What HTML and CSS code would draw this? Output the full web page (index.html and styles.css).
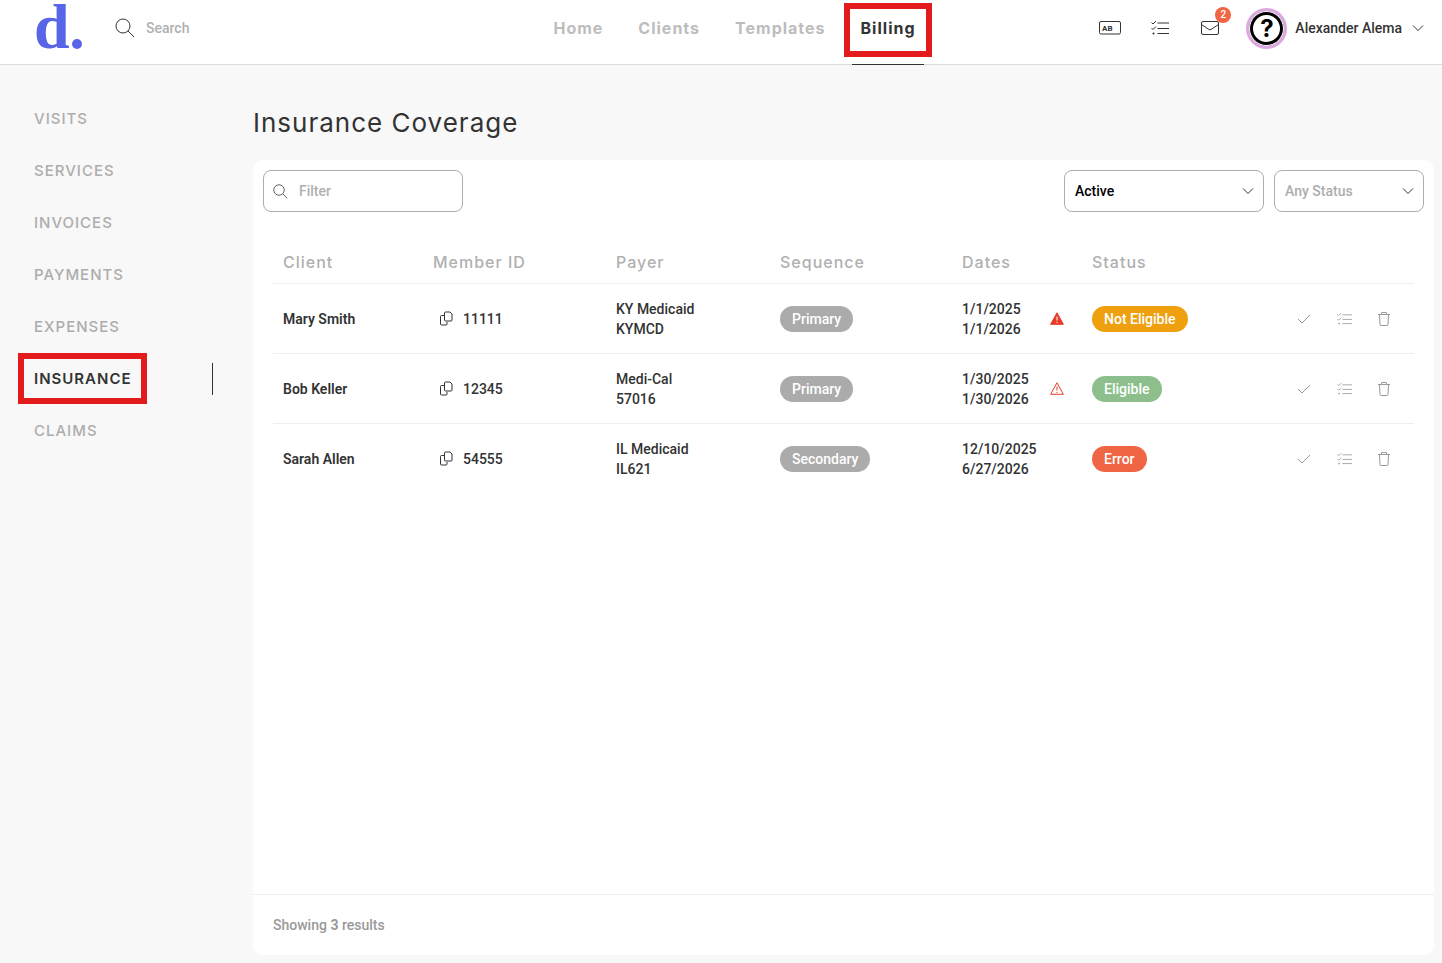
FILE: index.html
```html
<!DOCTYPE html>
<html lang="en">
<head>
    <meta charset="UTF-8">
    <meta name="viewport" content="width=device-width, initial-scale=1.0">
    <title>Insurance Coverage</title>
    <link rel="stylesheet" href="styles.css">
</head>
<body>
    <!-- shared icons -->
    <svg class="sprite" aria-hidden="true">
        <symbol id="search" viewBox="0 0 20 20"><circle cx="8" cy="8" r="7"/><path d="M13 13l6 6"/></symbol>
        <symbol id="chevron" viewBox="0 0 12 8"><path d="M1 1.5l5 5 5-5"/></symbol>
        <symbol id="tasks" viewBox="0 0 18 16"><path d="M6.500 3H18M6.500 8.500H18M6.500 13.500H18M.5 2.500l1.500 1.500L5 1M.5 8l1.500 1.500L5 6.500"/><circle cx="2.500" cy="13.500" r=".7"/></symbol>
        <symbol id="check" viewBox="0 0 14 14"><path d="M1 7l4 4 8-8"/></symbol>
        <symbol id="trash" viewBox="0 0 14 16"><path d="M1 3.500h12M4.500 3.500V2q0-.5.500-.5h4q.5 0 .5.500v1.500M2.500 3.500l.5 10q.1 1 1 1h6q.9 0 1-1l.5-10"/></symbol>
        <symbol id="copy" viewBox="0 0 14 15"><path d="M5.500 2q0-1 1-1H11l2 2v6q0 1-1 1H6.500q-1 0-1-1zM5.500 4.500h-3q-1 0-1 1V13q0 1 1 1H7q1 0 1-1v-2"/></symbol>
    </svg>

    <header class="header">
        <div class="header-left">
            <a class="logo" href="#" aria-label="Home page">
                <svg width="50" height="56" viewBox="0 0 50 56"><text x="0" y="48">d</text><circle cx="43" cy="44" r="5"/></svg>
            </a>
            <label class="search">
                <svg class="icon" width="20" height="20"><use href="#search"/></svg>
                <input type="search" placeholder="Search" aria-label="Search">
            </label>
        </div>
        <nav class="nav">
            <a href="#">Home</a>
            <a href="#">Clients</a>
            <a href="#">Templates</a>
            <a class="active" href="#">Billing</a>
        </nav>
        <div class="header-right">
            <button class="tool" aria-label="Text snippets">
                <svg class="icon" width="22" height="14" viewBox="0 0 22 14"><rect x=".5" y=".5" width="21" height="12.500" rx="1.500"/><text x="3" y="10">AB</text></svg>
            </button>
            <button class="tool" aria-label="Tasks">
                <svg class="icon" width="18" height="16"><use href="#tasks"/></svg>
            </button>
            <button class="tool" aria-label="Messages">
                <svg class="icon" width="18" height="14" viewBox="0 0 18 14"><rect x=".5" y=".5" width="17" height="13" rx="1.500"/><path d="M.5 3.500l7.500 5q1 .6 2 0l7.500-5"/></svg>
                <span class="count">2</span>
            </button>
            <button class="user">
                <span class="avatar">?</span>
                <span>Alexander Alema</span>
                <svg class="icon" width="12" height="8"><use href="#chevron"/></svg>
            </button>
        </div>
    </header>

    <div class="layout">
        <aside class="sidebar">
            <a href="#">VISITS</a>
            <a href="#">SERVICES</a>
            <a href="#">INVOICES</a>
            <a href="#">PAYMENTS</a>
            <a href="#">EXPENSES</a>
            <a class="active" href="#"><span>INSURANCE</span></a>
            <a href="#">CLAIMS</a>
        </aside>

        <main class="main">
            <h1>Insurance Coverage</h1>
            <section class="card">
                <div class="filters">
                    <label class="field filter">
                        <svg class="icon" width="15" height="15"><use href="#search"/></svg>
                        <input type="text" placeholder="Filter" aria-label="Filter">
                    </label>
                    <div class="field active-select">
                        <select aria-label="Coverage">
                            <option>Active</option>
                            <option>Inactive</option>
                        </select>
                        <svg class="icon" width="12" height="8"><use href="#chevron"/></svg>
                    </div>
                    <div class="field status-select">
                        <select aria-label="Status">
                            <option>Any Status</option>
                            <option>Eligible</option>
                            <option>Not Eligible</option>
                            <option>Error</option>
                        </select>
                        <svg class="icon" width="12" height="8"><use href="#chevron"/></svg>
                    </div>
                </div>

                <div class="table-wrap">
                    <table>
                        <thead>
                            <tr>
                                <th class="col-client">Client</th>
                                <th class="col-member">Member ID</th>
                                <th class="col-payer">Payer</th>
                                <th class="col-sequence">Sequence</th>
                                <th class="col-dates">Dates</th>
                                <th>Status</th>
                                <th class="col-actions"></th>
                            </tr>
                        </thead>
                        <tbody>
                            <tr>
                                <td class="client">Mary Smith</td>
                                <td><div class="member"><button aria-label="Copy"><svg class="icon" width="14" height="15"><use href="#copy"/></svg></button>11111</div></td>
                                <td>KY Medicaid<br>KYMCD</td>
                                <td><span class="badge">Primary</span></td>
                                <td>
                                    <div class="dates">
                                        <span>1/1/2025<br>1/1/2026</span>
                                        <svg class="warning filled" width="14" height="13" viewBox="0 0 14 13"><path d="M7 .8L13.400 12.300H.6z"/><path class="mark" d="M7 4.500v4M7 9.800v1.200"/></svg>
                                    </div>
                                </td>
                                <td><span class="badge orange">Not Eligible</span></td>
                                <td>
                                    <div class="actions">
                                        <button aria-label="Verify"><svg class="icon" width="14" height="14"><use href="#check"/></svg></button>
                                        <button aria-label="History"><svg class="icon" width="15" height="14"><use href="#tasks"/></svg></button>
                                        <button aria-label="Delete"><svg class="icon" width="14" height="16"><use href="#trash"/></svg></button>
                                    </div>
                                </td>
                            </tr>
                            <tr>
                                <td class="client">Bob Keller</td>
                                <td><div class="member"><button aria-label="Copy"><svg class="icon" width="14" height="15"><use href="#copy"/></svg></button>12345</div></td>
                                <td>Medi-Cal<br>57016</td>
                                <td><span class="badge">Primary</span></td>
                                <td>
                                    <div class="dates">
                                        <span>1/30/2025<br>1/30/2026</span>
                                        <svg class="warning" width="14" height="13" viewBox="0 0 14 13"><path d="M7 .8L13.400 12.300H.6z"/><path class="mark" d="M7 4.500v4M7 9.800v1.200"/></svg>
                                    </div>
                                </td>
                                <td><span class="badge green">Eligible</span></td>
                                <td>
                                    <div class="actions">
                                        <button aria-label="Verify"><svg class="icon" width="14" height="14"><use href="#check"/></svg></button>
                                        <button aria-label="History"><svg class="icon" width="15" height="14"><use href="#tasks"/></svg></button>
                                        <button aria-label="Delete"><svg class="icon" width="14" height="16"><use href="#trash"/></svg></button>
                                    </div>
                                </td>
                            </tr>
                            <tr>
                                <td class="client">Sarah Allen</td>
                                <td><div class="member"><button aria-label="Copy"><svg class="icon" width="14" height="15"><use href="#copy"/></svg></button>54555</div></td>
                                <td>IL Medicaid<br>IL621</td>
                                <td><span class="badge">Secondary</span></td>
                                <td><div class="dates"><span>12/10/2025<br>6/27/2026</span></div></td>
                                <td><span class="badge red">Error</span></td>
                                <td>
                                    <div class="actions">
                                        <button aria-label="Verify"><svg class="icon" width="14" height="14"><use href="#check"/></svg></button>
                                        <button aria-label="History"><svg class="icon" width="15" height="14"><use href="#tasks"/></svg></button>
                                        <button aria-label="Delete"><svg class="icon" width="14" height="16"><use href="#trash"/></svg></button>
                                    </div>
                                </td>
                            </tr>
                        </tbody>
                    </table>
                </div>

                <div class="card-footer">Showing <strong>3</strong> results</div>
            </section>
        </main>
    </div>
</body>
</html>
```
FILE: styles.css
```css
*, *::before {
    box-sizing: border-box;
}
body {
    display: flex;
    flex-direction: column;
    min-height: 100vh;
    margin: 0;
    background-color: #f8f8f8;
    color: #333333;
    font-family: Roboto, sans-serif;
    font-size: 14px;
    font-weight: 500;
    line-height: 20px;
}
a {
    color: inherit;
    text-decoration: none;
}
button, input, select {
    padding: 0;
    border: none;
    background: none;
    color: inherit;
    font: inherit;
    outline: none;
}
button {
    cursor: pointer;
}
input::placeholder {
    color: #b0b0b0;
    opacity: 1;
}
.sprite {
    position: absolute;
    width: 0;
    height: 0;
}
.icon {
    display: block;
    flex: none;
    fill: none;
    stroke: currentColor;
}

/* header */
.header {
    display: grid;
    grid-template-columns: 1fr auto 1fr;
    height: 65px;
    padding: 0 18px 0 34px;
    background-color: #ffffff;
    border-bottom: 1px solid #dcdcdc;
}
.header-left, .header-right {
    display: flex;
    align-items: center;
    height: 56px;
}
.header-right {
    justify-content: flex-end;
}
.logo svg {
    display: block;
    fill: #5865e8;
}
.logo text {
    font-family: "Liberation Serif", serif;
    font-size: 64px;
    font-weight: bold;
}
.search {
    display: flex;
    align-items: center;
    gap: 11px;
    margin-left: 31px;
}
.search input {
    width: 160px;
}
.nav {
    display: flex;
    gap: 18px;
    margin-left: 10px;
    color: #bdbdbd;
    font-family: Inter, sans-serif;
    font-size: 16px;
    font-weight: 700;
    letter-spacing: 1px;
}
.nav a {
    height: 65px;
    padding: 18px 8px 0 9px;
}
.nav .active {
    position: relative;
    border-bottom: 1px solid #333333;
    color: #333333;
}
.nav .active::before {
    content: "";
    position: absolute;
    top: 3px;
    right: -8px;
    left: -8px;
    height: 54px;
    border: 6px solid #e31b1c;
}
.tool {
    position: relative;
    display: flex;
    align-items: center;
    justify-content: center;
    width: 50px;
    height: 40px;
}
.tool text {
    fill: currentColor;
    stroke: none;
    font-size: 8px;
    font-weight: 700;
}
.count {
    position: absolute;
    top: -1px;
    right: 4px;
    width: 16px;
    height: 16px;
    border-radius: 8px;
    background-color: #f06543;
    color: #ffffff;
    font-size: 10px;
    line-height: 16px;
    text-align: center;
}
.user {
    display: flex;
    align-items: center;
    gap: 8px;
    margin-left: 11px;
}
.user .icon {
    margin-left: 2px;
}
.avatar {
    width: 41px;
    height: 41px;
    border: 3px solid #dda8e0;
    border-radius: 50%;
    box-shadow: inset 0 0 0 1px #ffffff, inset 0 0 0 4px #000000;
    color: #000000;
    font-family: Inter, sans-serif;
    font-size: 24px;
    font-weight: 700;
    line-height: 35px;
    text-align: center;
}

/* sidebar */
.layout {
    display: flex;
    flex: 1;
}
.sidebar {
    display: flex;
    flex: none;
    flex-direction: column;
    gap: 20px;
    width: 213px;
    padding-top: 38px;
    color: #adadad;
    font-family: Inter, sans-serif;
    font-size: 15px;
    letter-spacing: 1px;
}
.sidebar a {
    padding: 6px 34px;
}
.sidebar .active {
    border-right: 1px solid #333333;
    color: #333333;
    font-weight: 600;
}
.sidebar .active span {
    position: relative;
}
.sidebar .active span::before {
    content: "";
    position: absolute;
    top: -16px;
    right: -15px;
    bottom: -16px;
    left: -16px;
    border: 6px solid #e31b1c;
}

/* content */
.main {
    display: flex;
    flex: 1;
    flex-direction: column;
    min-width: 0;
    padding: 38px 8px 8px 40px;
}
h1 {
    margin: 0 0 18px;
    font-family: Inter, sans-serif;
    font-size: 26px;
    font-weight: 400;
    line-height: 39px;
    letter-spacing: 1px;
}
.card {
    display: flex;
    flex: 1;
    flex-direction: column;
    background-color: #ffffff;
    border-radius: 10px;
}
.filters {
    display: flex;
    gap: 10px;
    padding: 10px;
}
.field {
    position: relative;
    display: flex;
    align-items: center;
    width: 200px;
    height: 42px;
    border: 1px solid #adadad;
    border-radius: 8px;
}
.filter {
    gap: 11px;
    margin-right: auto;
    padding: 0 9px;
}
.filter input {
    flex: 1;
    min-width: 0;
}
.field select {
    width: 100%;
    height: 100%;
    padding: 0 10px;
    appearance: none;
}
.field select + .icon {
    position: absolute;
    right: 9px;
    pointer-events: none;
}
.active-select select {
    color: #000000;
}
.status-select {
    width: 150px;
}
.status-select select {
    color: #adadad;
}
.table-wrap {
    flex: 1;
    padding: 19px 20px;
}
table {
    width: 100%;
    border-collapse: collapse;
    table-layout: fixed;
}
th {
    padding: 11px 10px;
    border-bottom: 1px solid #eeeeee;
    color: #b0b0b0;
    font-family: Inter, sans-serif;
    font-size: 16px;
    font-weight: 500;
    letter-spacing: 1px;
    text-align: left;
}
td {
    height: 70px;
    padding: 14px 10px;
    border-bottom: 1px solid #eeeeee;
}
tbody tr:last-child td {
    border-bottom: none;
}
.col-client {
    width: 150px;
}
.col-member {
    width: 183px;
}
.col-payer {
    width: 164px;
}
.col-sequence {
    width: 182px;
}
.col-dates {
    width: 130px;
}
.col-actions {
    width: 140px;
}
.client {
    font-weight: 600;
}
.member {
    display: flex;
    align-items: center;
    gap: 10px;
    padding-left: 6px;
}
.badge {
    display: inline-block;
    padding: 3px 12px;
    border-radius: 13px;
    background-color: #ababab;
    color: #ffffff;
    vertical-align: middle;
}
.orange {
    background-color: #eea00e;
}
.green {
    background-color: #8cbf8c;
}
.red {
    background-color: #f06543;
}
.dates {
    display: flex;
    align-items: center;
    justify-content: space-between;
    margin-right: 8px;
    white-space: nowrap;
}
.warning {
    flex: none;
    fill: none;
    stroke: #e63c28;
    stroke-linejoin: round;
}
.filled {
    fill: #e63c28;
}
.filled .mark {
    stroke: #ffffff;
}
.actions {
    display: flex;
    justify-content: flex-end;
    color: #999999;
}
.actions button {
    display: flex;
    align-items: center;
    justify-content: center;
    width: 40px;
    height: 40px;
}
.card-footer {
    padding: 20px;
    border-top: 1px solid #eeeeee;
    color: #999999;
}
```
